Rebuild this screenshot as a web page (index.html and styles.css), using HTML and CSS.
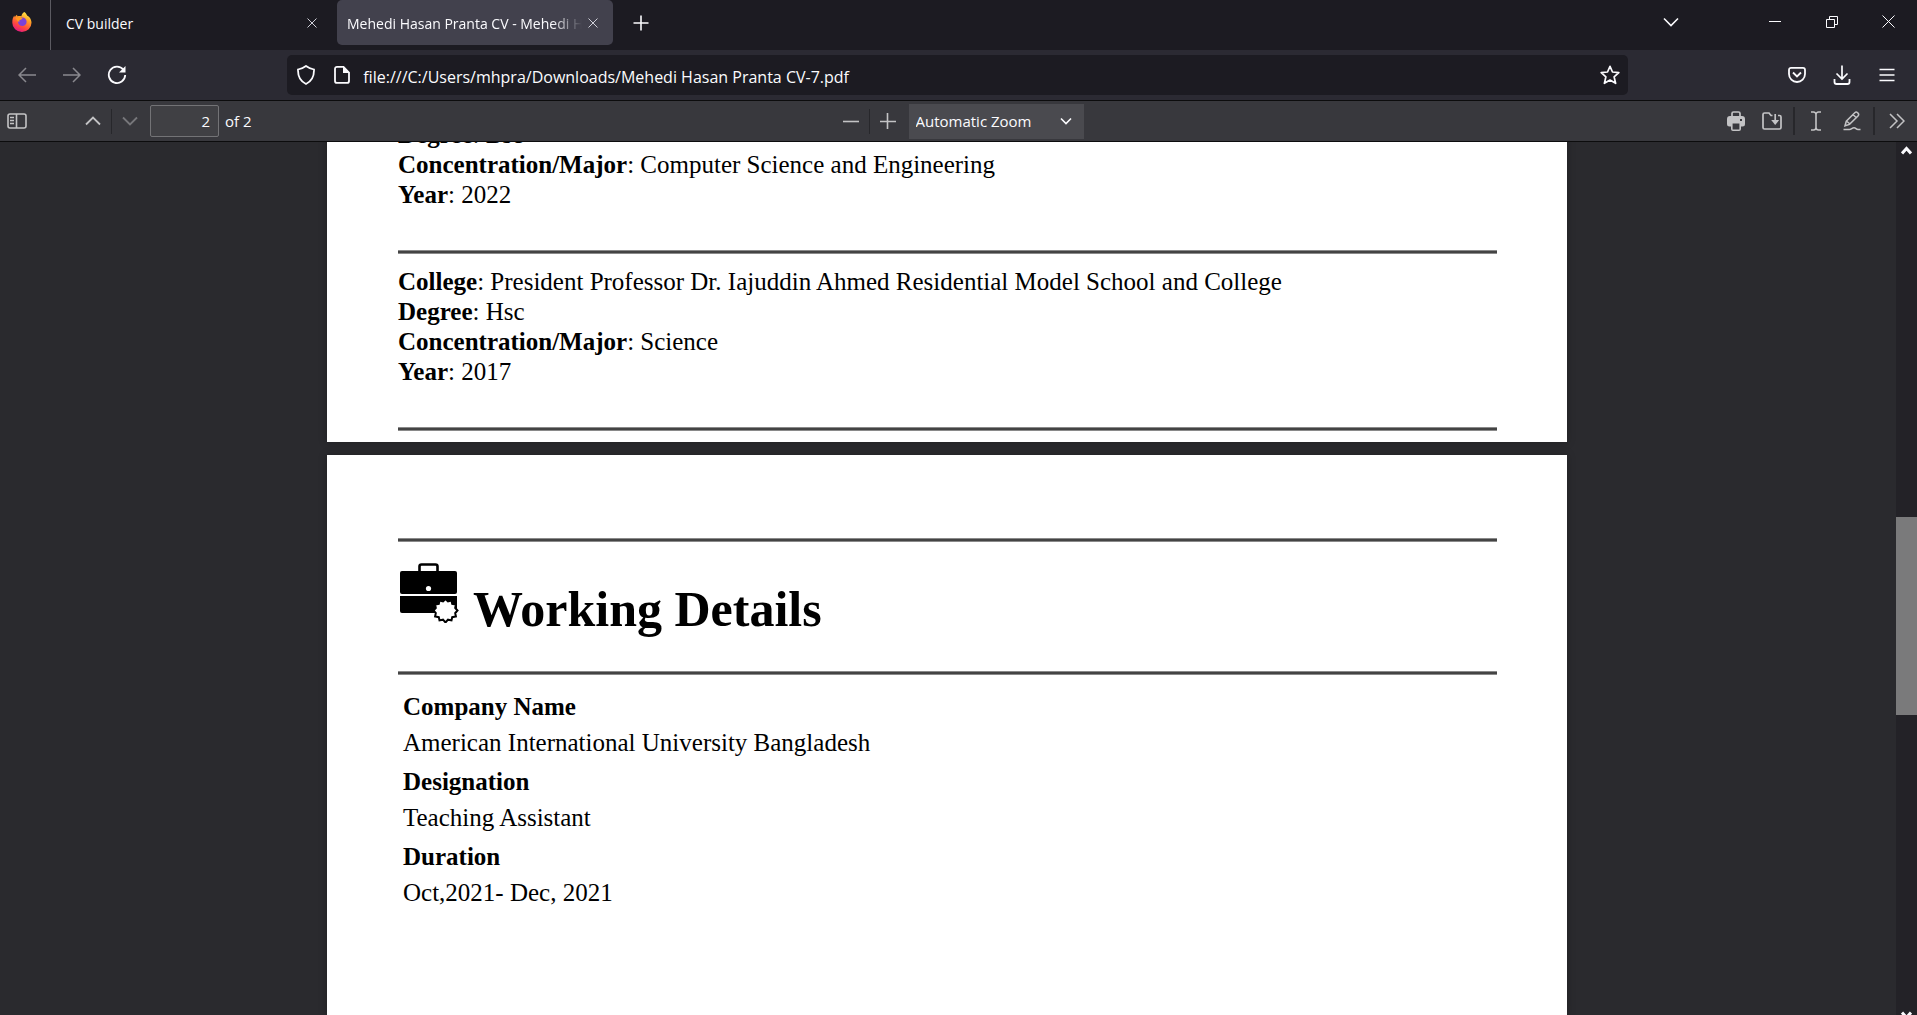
FILE: index.html
```html
<!DOCTYPE html>
<html lang="en">
<head>
<meta charset="utf-8">
<title>Mehedi Hasan Pranta CV</title>
<link rel="stylesheet" href="styles.css">
</head>
<body>
<div class="browser">
  <header class="tabstrip">
    <div class="pinned">
      <svg class="firefox" width="20" height="20" viewBox="0 0 20 20" aria-hidden="true">
        <defs>
          <linearGradient id="flame" x1="0.8" y1="0" x2="0.3" y2="1">
            <stop offset="0" stop-color="#fff44f"/><stop offset="0.35" stop-color="#ffa026"/>
            <stop offset="0.7" stop-color="#ff4a3d"/><stop offset="1" stop-color="#e31587"/>
          </linearGradient>
        </defs>
        <path d="M12.300 0c1.600 1 2.300 2.400 2.900 3.700 1.200.3 2.200 1.300 2.800 2.300.8 1.300 1.500 3 1.500 4.800A9.600 9.200 0 0 1 .3 10.800C.2 7.600 1 5.200 2.300 3.500l.5 1.700C3.300 4.200 4 3.400 5 2.800l.4 1.500c1.400-.5 2.700-.5 4-.1C9.600 2.500 10.800 1 12.300 0z" fill="url(#flame)"/>
        <circle cx="10.300" cy="9.800" r="4.300" fill="#7a42d8"/>
        <path d="M3.500 6.500c1.500-1.300 3.300-1.500 5-.8l2 .6c-.2 1-1.300 1.400-2.800 1.600-.6.600-.5 1.300.2 1.900-1.500.3-2.700-.6-2.900-1.700z" fill="#ff9a1f"/>
      </svg>
    </div>
    <div class="tab">
      <span class="tab-title">CV builder</span>
      <button class="tab-close" aria-label="Close tab"><svg width="12" height="12" viewBox="0 0 12 12"><path d="M1.500 1.500l9 9M10.500 1.500l-9 9"/></svg></button>
    </div>
    <div class="tab active">
      <span class="tab-title">Mehedi Hasan Pranta CV - Mehedi Hasan</span>
      <button class="tab-close" aria-label="Close tab"><svg width="12" height="12" viewBox="0 0 12 12"><path d="M1.500 1.500l9 9M10.500 1.500l-9 9"/></svg></button>
    </div>
    <button class="new-tab" aria-label="New tab"><svg width="16" height="16" viewBox="0 0 16 16"><path d="M8 .5v15M.5 8h15" stroke-width="1.600"/></svg></button>
    <div class="window-controls">
      <button class="list-tabs" aria-label="List all tabs"><svg width="16" height="10" viewBox="0 0 16 10"><path d="M1 1.500l7 7 7-7" stroke-width="1.600"/></svg></button>
      <button aria-label="Minimize"><svg width="12" height="12" viewBox="0 0 12 12"><path d="M0 5.500h12"/></svg></button>
      <button aria-label="Restore"><svg width="12" height="12" viewBox="0 0 12 12"><path d="M.5 3.500h8v8h-8zM3.500 3.500v-3h8v8h-3"/></svg></button>
      <button aria-label="Close"><svg width="13" height="13" viewBox="0 0 13 13"><path d="M.5.5l12 12M12.500.5l-12 12"/></svg></button>
    </div>
  </header>

  <nav class="navbar">
    <div class="nav-left">
      <button class="dim" aria-label="Back"><svg width="18" height="16" viewBox="0 0 18 16"><path d="M8 1L1 8l7 7M1 8h17" stroke-width="1.500"/></svg></button>
      <button class="dim" aria-label="Forward"><svg width="18" height="16" viewBox="0 0 18 16"><path d="M10 1l7 7-7 7M17 8H0" stroke-width="1.500"/></svg></button>
      <button aria-label="Reload"><svg width="20" height="20" viewBox="0 0 20 20"><path d="M16.500 4.800A8.200 8.200 0 1 0 18.200 10" stroke-width="1.800"/><path d="M18.500 1v6.500H12z" fill="currentColor" stroke="none"/></svg></button>
    </div>
    <div class="urlbar">
      <button aria-label="Tracking protection"><svg width="20" height="20" viewBox="0 0 20 20"><path d="M10 1c2 1.500 4.500 2.600 8 3.500.2 6-1.500 11.500-8 14.500C3.500 16 1.800 10.500 2 4.500 5.500 3.600 8 2.500 10 1z" stroke-width="1.800"/></svg></button>
      <button aria-label="Page information"><svg width="18" height="20" viewBox="0 0 18 20"><path d="M10.500 1.900H4A2 2 0 0 0 2 3.900v12a2 2 0 0 0 2 2h10a2 2 0 0 0 2-2V7.500z" stroke-width="1.800"/><path d="M10 1.500V8h6.500z" fill="currentColor" stroke="none"/></svg></button>
      <input type="text" aria-label="Address" value="file:///C:/Users/mhpra/Downloads/Mehedi Hasan Pranta CV-7.pdf">
      <button aria-label="Bookmark this page"><svg width="20" height="20" viewBox="0 0 20 20"><path d="M10 1.300l2.500 5.700 6.300.6-4.700 4.200 1.500 6.500L10 15l-5.600 3.300 1.500-6.500L1.200 7.600 7.500 7z" stroke-width="1.700" stroke-linejoin="round"/></svg></button>
    </div>
    <div class="nav-right">
      <button aria-label="Save to Pocket"><svg width="18" height="18" viewBox="0 0 18 18"><path d="M3 1.900h12A2 2 0 0 1 17 3.900V8A8 8 0 0 1 1 8V3.900A2 2 0 0 1 3 1.900z" stroke-width="1.800"/><path d="M5 6.500l4 4 4-4" stroke-width="1.800"/></svg></button>
      <button aria-label="Downloads"><svg width="18" height="20" viewBox="0 0 18 20"><path d="M9 .5v13M3.500 8.500L9 14l5.500-5.500" stroke-width="1.700"/><path d="M1.500 14v3a2 2 0 0 0 2 2h11a2 2 0 0 0 2-2v-3" stroke-width="1.800"/></svg></button>
      <button aria-label="Menu"><svg width="16" height="14" viewBox="0 0 16 14"><path d="M.5 1.500h15M.5 7h15M.5 12.500h15" stroke-width="1.600"/></svg></button>
    </div>
  </nav>

  <div class="toolbar">
    <div class="tools-left">
      <button class="sidebar-toggle" aria-label="Toggle sidebar"><svg width="20" height="16" viewBox="0 0 20 16"><rect x="1" y="1" width="18" height="14" rx="2" stroke-width="1.600"/><path d="M9.500 1v14" stroke-width="1.600"/><path d="M3 4.500h4M3 7.500h4M3 10.500h4" stroke-width="1.500"/></svg></button>
      <button aria-label="Previous page"><svg width="16" height="10" viewBox="0 0 16 10"><path d="M1 8.500l7-7 7 7" stroke-width="1.800"/></svg></button>
      <span class="sep"></span>
      <button class="dim" aria-label="Next page"><svg width="16" height="10" viewBox="0 0 16 10"><path d="M1 1.500l7 7 7-7" stroke-width="1.800"/></svg></button>
      <input class="page-number" type="text" id="page" value="2">
      <label for="page">of 2</label>
    </div>
    <div class="tools-center">
      <button aria-label="Zoom out"><svg width="16" height="16" viewBox="0 0 16 16"><path d="M0 8.500h16" stroke-width="1.600"/></svg></button>
      <span class="sep"></span>
      <button class="zoom-in" aria-label="Zoom in"><svg width="16" height="16" viewBox="0 0 16 16"><path d="M0 8.500h16M7.500 0v16" stroke-width="1.600"/></svg></button>
      <div class="zoom">
        <select aria-label="Zoom"><option>Automatic Zoom</option></select>
        <svg width="12" height="8" viewBox="0 0 12 8"><path d="M1 1.500l5 5 5-5" stroke-width="1.600"/></svg>
      </div>
    </div>
    <div class="tools-right">
      <button aria-label="Print"><svg width="18" height="20" viewBox="0 0 18 20"><path d="M5 6V2.500A1.500 1.500 0 0 1 6.500 1h5A1.500 1.500 0 0 1 13 2.500V6" stroke-width="1.700"/><path fill-rule="evenodd" d="M3 5h12a3 3 0 0 1 3 3v5a2.500 2.500 0 0 1-2.500 2.500H14V18a2 2 0 0 1-2 2H6a2 2 0 0 1-2-2v-2.500H2.500A2.500 2.500 0 0 1 0 13V8a3 3 0 0 1 3-3zm2.600 7.500v5.900h6.800v-5.900zM13 8v2h2V8z" fill="currentColor" stroke="none"/></svg></button>
      <button aria-label="Save"><svg width="20" height="18" viewBox="0 0 20 18"><path d="M10.500 3.500H9L7 1H2.500A1.500 1.500 0 0 0 1 2.500v13A1.500 1.500 0 0 0 2.500 17h15a1.500 1.500 0 0 0 1.500-1.500V5a1.500 1.500 0 0 0-1.500-1.500H16" stroke-width="1.700"/><path d="M13.200 2v9" stroke-width="1.700"/><path d="M9.200 8h8l-4 5z" fill="currentColor" stroke="none"/></svg></button>
      <span class="sep tall"></span>
      <button aria-label="Text"><svg width="12" height="20" viewBox="0 0 12 20"><path d="M1 1h2.500A2.500 2.500 0 0 1 6 3.500v13A2.500 2.500 0 0 1 3.500 19H1M11 1H8.500A2.500 2.500 0 0 0 6 3.500v13A2.500 2.500 0 0 0 8.500 19H11" stroke-width="1.600"/></svg></button>
      <button aria-label="Draw"><svg width="18" height="20" viewBox="0 0 18 20"><path d="M2 14.800l1.300-4.600 8.500-8.500a2 2 0 0 1 2.800 0l.4.400a2 2 0 0 1 0 2.800l-8.500 8.500zM10 3.500l3.300 3.300M4 10.500l3 2.500" stroke-width="1.500"/><path d="M.5 18.500h6c2 0 2.500-1.700 4.500-1.700s2 1.700 4 1.700h2.500" stroke-width="1.500"/></svg></button>
      <span class="sep tall"></span>
      <button class="more" aria-label="Tools"><svg width="16" height="16" viewBox="0 0 16 16"><path d="M1 1l7 7-7 7M8 1l7 7-7 7" stroke-width="1.500"/></svg></button>
    </div>
  </div>

  <div class="viewer">
    <main class="pages">
      <section class="page first">
        <p><b>Degree</b>: Bsc<br><b>Concentration/Major</b>: Computer Science and Engineering<br><b>Year</b>: 2022</p>
        <hr>
        <p><b>College</b>: President Professor Dr. Iajuddin Ahmed Residential Model School and College<br><b>Degree</b>: Hsc<br><b>Concentration/Major</b>: Science<br><b>Year</b>: 2017</p>
        <hr>
      </section>
      <section class="page second">
        <hr>
        <h1>
          <svg width="60" height="60" viewBox="0 0 60 60" aria-hidden="true">
            <path d="M20.500 8V3.500a2 2 0 0 1 2-2h14a2 2 0 0 1 2 2V8" fill="none" stroke="#000" stroke-width="2.600"/>
            <rect x="1" y="8" width="57" height="23" rx="2"/>
            <path d="M1 33h57v17H3a2 2 0 0 1-2-2z"/>
            <circle cx="29.500" cy="25.500" r="2.600" fill="#fff"/>
            <path d="M46 50h12v10H40z" fill="#fff"/>
            <path d="M46.500 36l2.500 2.300 3.500-.7.700 3.200 3.700.7-.7 3.500 2.300 2.500-2.300 2.500.7 3.500-3.700.7-.7 3.200-3.500-.7-2.500 2.800-2.500-2.800-3.500.7-.7-3.200-3.700-.7.700-3.500-2.300-2.500 2.300-2.500-.7-3.500 3.700-.7.700-3.200 3.500.7z" fill="#fff" stroke="#000" stroke-width="2"/>
          </svg>
          <span>Working Details</span>
        </h1>
        <hr>
        <dl>
          <dt>Company Name</dt><dd>American International University Bangladesh</dd>
          <dt>Designation</dt><dd>Teaching Assistant</dd>
          <dt>Duration</dt><dd>Oct,2021- Dec, 2021</dd>
        </dl>
      </section>
    </main>
    <div class="scrollbar">
      <svg width="11" height="9" viewBox="0 0 11 9"><path d="M1 7.500l4.500-5 4.500 5" stroke-width="3"/></svg>
      <div class="track"><div class="thumb"></div></div>
      <svg class="down" width="11" height="4" viewBox="0 0 11 4"><path d="M1 1.500l4.500 5 4.500-5" stroke-width="3"/></svg>
    </div>
  </div>
</div>
</body>
</html>
```
FILE: styles.css
```css
* { box-sizing: border-box; }

body {
  margin: 0;
  background: #2a2a2e;
  color: #fbfbfe;
  font: 15px "Open Sans", "Noto Sans", sans-serif;
}

button, input, select { font: inherit; color: inherit; }

button {
  display: flex;
  flex: none;
  align-items: center;
  justify-content: center;
  padding: 0;
  border: 0;
  background: none;
}

svg { display: block; flex: none; fill: none; stroke: currentColor; }

.browser {
  display: flex;
  flex-direction: column;
  height: 100vh;
  overflow: hidden;
}

.dim { opacity: 0.45; }

/* Tab strip */
.tabstrip {
  display: flex;
  flex: none;
  height: 50px;
  background: #1c1b22;
}

.pinned {
  width: 51px;
  padding: 12px 0 0 12px;
  border-right: 1px solid #5b5a61;
}
.firefox { stroke: none; }

.tab {
  display: flex;
  align-items: center;
  width: 276px;
  height: 45px;
  margin-right: 5px;
  padding: 0 9px 0 10px;
  border-radius: 5px;
}
.pinned + .tab { width: 281px; padding-left: 15px; }
.tab.active { background: #42414d; }

.tab-title {
  flex: 1;
  overflow: hidden;
  padding-top: 2px;
  font-size: 14px;
  line-height: 20px;
  white-space: nowrap;
}
.active .tab-title {
  -webkit-mask-image: linear-gradient(to left, transparent, #000 30px);
  mask-image: linear-gradient(to left, transparent, #000 30px);
}
.tab-close { width: 22px; height: 22px; color: #cfcfd8; }

.new-tab { width: 45px; height: 45px; }
.window-controls { display: flex; height: 43px; margin-left: auto; }
.window-controls button { width: 57px; }
.window-controls .list-tabs { width: 44px; margin-right: 53px; }

/* Navigation */
.navbar {
  display: grid;
  grid-template-columns: 1fr 70% 1fr;
  align-items: center;
  flex: none;
  height: 50px;
  padding-right: 2px;
  background: #2b2a33;
}
.nav-left, .nav-right { display: flex; }
.nav-left { padding-left: 4px; }
.nav-right { justify-content: flex-end; padding-right: 6px; }
.nav-left button, .nav-right button { width: 45px; height: 40px; }

.urlbar {
  display: flex;
  align-items: center;
  height: 40px;
  padding-left: 1px;
  border-radius: 5px;
  background: #1c1b22;
}
.urlbar button { width: 36px; height: 36px; }
.urlbar input {
  flex: 1;
  min-width: 0;
  padding: 4px 0 0 3px;
  border: 0;
  background: none;
  font-size: 16px;
}

/* PDF toolbar */
.toolbar {
  display: grid;
  grid-template-columns: 1fr auto 1fr;
  flex: none;
  height: 42px;
  padding-right: 1px;
  border: solid #0c0c0d;
  border-width: 1px 0;
  background: #38383d;
}
.toolbar > div { display: flex; align-items: center; }
.toolbar button { width: 36px; height: 36px; color: #c3c3c5; }
.toolbar button.sidebar-toggle { width: 34px; margin-right: 41px; }
.sep { width: 1px; height: 25px; background: #27272b; }
.sep.tall { width: 2px; height: 28px; margin: 0 3px; }

.page-number {
  width: 69px;
  height: 32px;
  margin: 0 6px 0 2px;
  padding: 0 8px;
  border: 1px solid #737376;
  border-radius: 2px;
  background: #404044;
  text-align: right;
}

.toolbar button.zoom-in { margin-right: 3px; }
.zoom { display: grid; align-items: center; }
.zoom > * { grid-area: 1 / 1; }
.zoom select {
  width: 175px;
  height: 35px;
  padding: 0 7px;
  border: 0;
  border-radius: 0;
  background: #4a4a4f;
  appearance: none;
}
.zoom svg { justify-self: end; margin-right: 12px; pointer-events: none; }
.tools-right { justify-content: flex-end; }
.toolbar button.more { width: 38px; }

/* Document */
.viewer { display: flex; flex: 1; min-height: 0; }

.pages {
  display: flex;
  flex: 1;
  flex-direction: column;
  align-items: center;
  gap: 13px;
  padding-right: 2px;
  overflow: hidden;
}

.page {
  width: 1240px;
  max-width: 100%;
  padding: 0 70px 0 71px;
  background: #fff;
  box-shadow: 0 0 8px rgba(0, 0, 0, 0.25);
  color: #000;
  font: 25px/30px "Liberation Serif", "Times New Roman", serif;
}
.page.first { margin-top: -22px; padding-bottom: 11px; }
.page.second { flex: 1; padding-top: 83px; }
.page p { margin: 0; }

.page hr {
  height: 4px;
  margin: 0;
  border: solid #8a8a8a;
  border-width: 1px 0;
  background: #444;
}
.first hr { margin-top: 40px; }
.first hr + p { margin-top: 13px; }

.page h1 {
  display: flex;
  gap: 14px;
  height: 129px;
  margin: 0;
  padding: 21px 0 0 1px;
  font-size: 50px;
  line-height: 60px;
}
.page h1 svg { fill: #000; stroke: none; }
.page h1 span { padding-top: 16px; }

.page dl { margin: 0; padding: 14px 0 0 5px; line-height: 36px; }
.page dt { font-weight: bold; }
.page dd { margin: 0 0 3px; }

.scrollbar {
  display: flex;
  flex-direction: column;
  align-items: center;
  width: 21px;
  padding-top: 4px;
  background: #232227;
}
.track { flex: 1; width: 100%; padding-top: 362px; }
.thumb { height: 198px; background: #7a7a7b; }
```
